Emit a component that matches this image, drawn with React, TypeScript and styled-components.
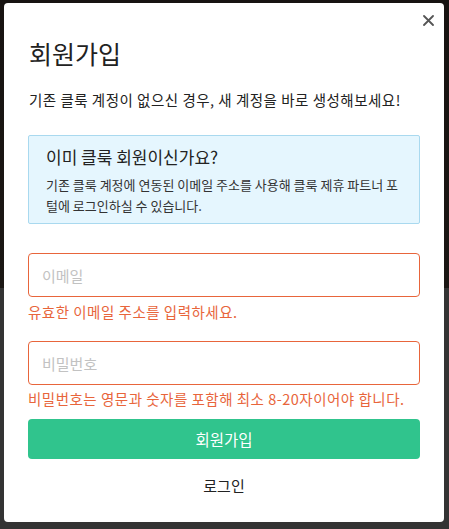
import React from "react";
import styled, { createGlobalStyle } from "styled-components";

const Global = createGlobalStyle`
  html, body { margin: 0; padding: 0; }
  body {
    background: linear-gradient(to bottom, #171311 0px, #1b1714 288px, #333333 288px, #333333 100%);
    font-family: "Noto Sans CJK KR", "Noto Sans", sans-serif;
    min-height: 529px;
  }
`;

const Backdrop = styled.div`
  display: flex;
  padding: 3px 5px 7px 4px;
`;

const Modal = styled.div`
  position: relative;
  width: 440px;
  height: 519px;
  box-sizing: border-box;
  background: #ffffff;
  border-radius: 4px;
  padding: 0 24px;
  display: flex;
  flex-direction: column;
`;

const Close = styled.button`
  position: absolute;
  top: 8px;
  right: 7px;
  width: 18px;
  height: 18px;
  padding: 0;
  border: none;
  background: transparent;
  display: flex;
  align-items: center;
  justify-content: center;
`;

const Title = styled.h1`
  margin: 32px 0 0 1px;
  font-size: 25px;
  line-height: 36px;
  font-weight: 400;
  color: #222222;
`;

const Subtitle = styled.p`
  margin: 18px 0 0 1px;
  font-size: 14.5px;
  letter-spacing: 0.5px;
  line-height: 22px;
  color: #222222;
`;

const InfoBox = styled.div`
  margin-top: 24px;
  border: 1px solid #a9d9ef;
  background: #e5f6fe;
  border-radius: 2px;
  padding: 9px 17px 7px 17px;
`;

const InfoTitle = styled.div`
  font-size: 17px;
  line-height: 24px;
  color: #222222;
`;

const InfoBody = styled.div`
  margin-top: 5px;
  font-size: 13px;
  line-height: 21px;
  color: #333333;
`;

const Input = styled.input<{ $top: number }>`
  margin-top: ${(p) => p.$top}px;
  height: 44px;
  box-sizing: border-box;
  border: 1px solid #e8653b;
  border-radius: 4px;
  padding: 0 13px;
  font-family: inherit;
  font-size: 15px;
  outline: none;
  &::placeholder { color: #c2c2c2; }
`;

const ErrorText = styled.div<{ $top: number }>`
  margin-top: ${(p) => p.$top}px;
  font-size: 14.5px;
  letter-spacing: 0.5px;
  line-height: 22px;
  color: #e8653b;
`;

const Submit = styled.button`
  margin-top: 9px;
  height: 40px;
  border: none;
  border-radius: 4px;
  background: #30c48d;
  color: #ffffff;
  font-family: inherit;
  font-size: 15.5px;
`;

const LoginLink = styled.div`
  margin-top: 16px;
  text-align: center;
  font-size: 15px;
  line-height: 22px;
  color: #222222;
`;

export default function App() {
  return (
    <>
      <Global />
      <Backdrop>
        <Modal>
          <Close aria-label="닫기">
            <svg width="11" height="11" viewBox="0 0 11 11">
              <path d="M1 1 L10 10 M10 1 L1 10" stroke="#555" strokeWidth="1.8" strokeLinecap="round" />
            </svg>
          </Close>
          <Title>회원가입</Title>
          <Subtitle>기존 클룩 계정이 없으신 경우, 새 계정을 바로 생성해보세요!</Subtitle>
          <InfoBox>
            <InfoTitle>이미 클룩 회원이신가요?</InfoTitle>
            <InfoBody>
              기존 클룩 계정에 연동된 이메일 주소를 사용해 클룩 제휴 파트너 포털에 로그인하실 수 있습니다.
            </InfoBody>
          </InfoBox>
          <Input $top={29} placeholder="이메일" />
          <ErrorText $top={4}>유효한 이메일 주소를 입력하세요.</ErrorText>
          <Input $top={18} type="password" placeholder="비밀번호" />
          <ErrorText $top={3}>비밀번호는 영문과 숫자를 포함해 최소 8-20자이어야 합니다.</ErrorText>
          <Submit>회원가입</Submit>
          <LoginLink>로그인</LoginLink>
        </Modal>
      </Backdrop>
    </>
  );
}
